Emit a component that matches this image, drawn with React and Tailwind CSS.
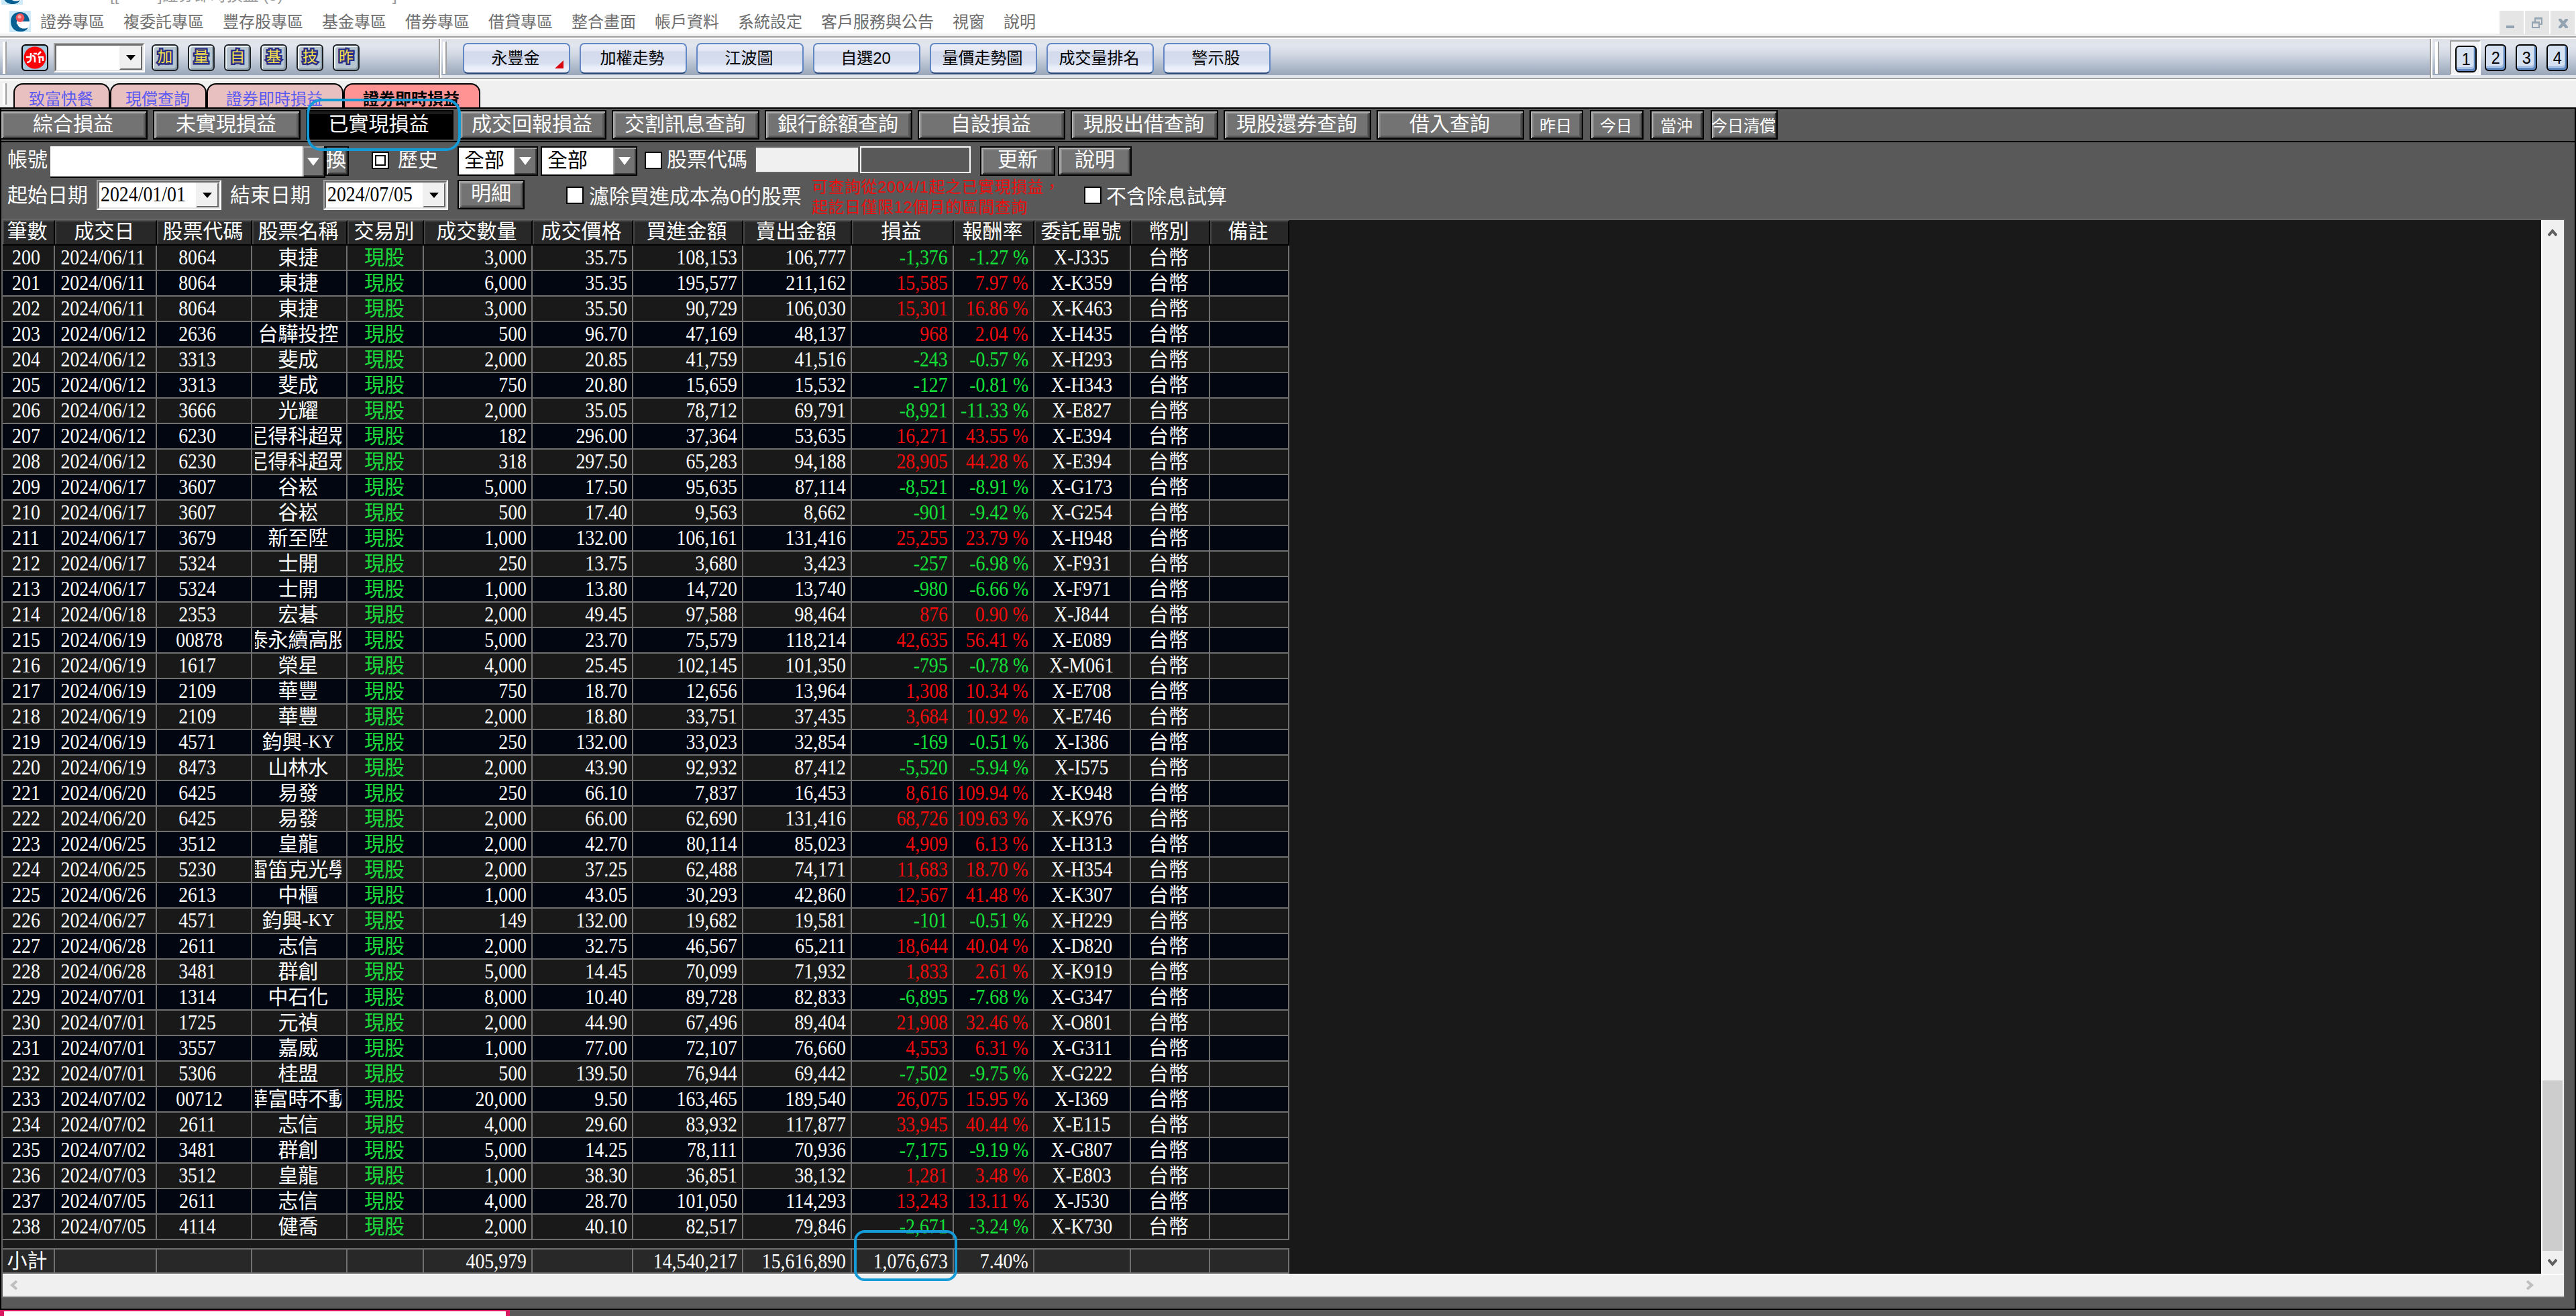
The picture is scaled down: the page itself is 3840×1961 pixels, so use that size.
import React from "react";

const SANS = "font-['Liberation_Sans','Noto_Sans_CJK_TC',sans-serif]";
const SERIF = "font-['Liberation_Serif','Noto_Sans_CJK_TC',serif]";
const BEVEL =
  "border-2 border-black bg-[#737373] shadow-[inset_2px_2px_0_#b0b0b0,inset_-2px_-2px_0_#3c3c3c,inset_4px_4px_0_#888888,inset_-4px_-4px_0_#5c5c5c]";

const menus = [
  "證券專區", "複委託專區", "豐存股專區", "基金專區", "借券專區", "借貸專區", "整合畫面",
  "帳戶資料", "系統設定", "客戶服務與公告", "視窗", "說明",
];

const tools = ["加", "量", "自", "基", "技", "昨"];
const quick = ["永豐金", "加權走勢", "江波圖", "自選20", "量價走勢圖", "成交量排名", "警示股"];
const pages = ["綜合損益", "未實現損益", "已實現損益", "成交回報損益", "交割訊息查詢", "銀行餘額查詢", "自設損益", "現股出借查詢", "現股還券查詢", "借入查詢"];

const cols = [
  { label: "筆數", w: "w-[78px]" },
  { label: "成交日", w: "w-[152px]" },
  { label: "股票代碼", w: "w-[142px]" },
  { label: "股票名稱", w: "w-[142px]" },
  { label: "交易別", w: "w-[114px]" },
  { label: "成交數量", w: "w-[162px]" },
  { label: "成交價格", w: "w-[150px]" },
  { label: "買進金額", w: "w-[164px]" },
  { label: "賣出金額", w: "w-[162px]" },
  { label: "損益", w: "w-[152px]" },
  { label: "報酬率", w: "w-[120px]" },
  { label: "委託單號", w: "w-[144px]" },
  { label: "幣別", w: "w-[118px]" },
  { label: "備註", w: "w-[118px]" },
];

const data = `06/11|8064|東捷|3,000|35.75|108,153|106,777|-1,376|-1.27|J335
06/11|8064|東捷|6,000|35.35|195,577|211,162|15,585|7.97|K359
06/11|8064|東捷|3,000|35.50|90,729|106,030|15,301|16.86|K463
06/12|2636|台驊投控|500|96.70|47,169|48,137|968|2.04|H435
06/12|3313|斐成|2,000|20.85|41,759|41,516|-243|-0.57|H293
06/12|3313|斐成|750|20.80|15,659|15,532|-127|-0.81|H343
06/12|3666|光耀|2,000|35.05|78,712|69,791|-8,921|-11.33|E827
06/12|6230|尼得科超眾|182|296.00|37,364|53,635|16,271|43.55|E394
06/12|6230|尼得科超眾|318|297.50|65,283|94,188|28,905|44.28|E394
06/17|3607|谷崧|5,000|17.50|95,635|87,114|-8,521|-8.91|G173
06/17|3607|谷崧|500|17.40|9,563|8,662|-901|-9.42|G254
06/17|3679|新至陞|1,000|132.00|106,161|131,416|25,255|23.79|H948
06/17|5324|士開|250|13.75|3,680|3,423|-257|-6.98|F931
06/17|5324|士開|1,000|13.80|14,720|13,740|-980|-6.66|F971
06/18|2353|宏碁|2,000|49.45|97,588|98,464|876|0.90|J844
06/19|00878|國泰永續高股息|5,000|23.70|75,579|118,214|42,635|56.41|E089
06/19|1617|榮星|4,000|25.45|102,145|101,350|-795|-0.78|M061
06/19|2109|華豐|750|18.70|12,656|13,964|1,308|10.34|E708
06/19|2109|華豐|2,000|18.80|33,751|37,435|3,684|10.92|E746
06/19|4571|鈞興-KY|250|132.00|33,023|32,854|-169|-0.51|I386
06/19|8473|山林水|2,000|43.90|92,932|87,412|-5,520|-5.94|I575
06/20|6425|易發|250|66.10|7,837|16,453|8,616|109.94|K948
06/20|6425|易發|2,000|66.00|62,690|131,416|68,726|109.63|K976
06/25|3512|皇龍|2,000|42.70|80,114|85,023|4,909|6.13|H313
06/25|5230|雷笛克光學|2,000|37.25|62,488|74,171|11,683|18.70|H354
06/26|2613|中櫃|1,000|43.05|30,293|42,860|12,567|41.48|K307
06/27|4571|鈞興-KY|149|132.00|19,682|19,581|-101|-0.51|H229
06/28|2611|志信|2,000|32.75|46,567|65,211|18,644|40.04|D820
06/28|3481|群創|5,000|14.45|70,099|71,932|1,833|2.61|K919
07/01|1314|中石化|8,000|10.40|89,728|82,833|-6,895|-7.68|G347
07/01|1725|元禎|2,000|44.90|67,496|89,404|21,908|32.46|O801
07/01|3557|嘉威|1,000|77.00|72,107|76,660|4,553|6.31|G311
07/01|5306|桂盟|500|139.50|76,944|69,442|-7,502|-9.75|G222
07/02|00712|復華富時不動產|20,000|9.50|163,465|189,540|26,075|15.95|I369
07/02|2611|志信|4,000|29.60|83,932|117,877|33,945|40.44|E115
07/02|3481|群創|5,000|14.25|78,111|70,936|-7,175|-9.19|G807
07/03|3512|皇龍|1,000|38.30|36,851|38,132|1,281|3.48|E803
07/05|2611|志信|4,000|28.70|101,050|114,293|13,243|13.11|J530
07/05|4114|健喬|2,000|40.10|82,517|79,846|-2,671|-3.24|K730`
  .split("\n")
  .map((line) => line.split("|"));

function Cell({ i, className = "", children }) {
  return (
    <div className={`${cols[i].w} flex h-full shrink-0 items-start border-r-2 border-[#707070] whitespace-nowrap ${className}`}>
      {children}
    </div>
  );
}

/* Condensed numerals, anchored to the right or to the middle of the cell. */
function Num({ i, right, color = "text-white", pad = "", children }) {
  return (
    <Cell i={i} className={right ? "justify-end pr-[7px]" : `justify-center ${pad || "pr-[7px]"}`}>
      <span className={`${color} ${right ? "origin-right" : "origin-center"} scale-x-[0.87] text-[32px] leading-[34px]`}>{children}</span>
    </Cell>
  );
}

function Name({ text }) {
  const [base, suffix] = text.split("-");
  return (
    <Cell i={3} className="pr-[7px] pl-[4px]">
      <div className="flex h-full w-full justify-center overflow-hidden text-[30px] leading-[35px] text-white">
        <span className="shrink-0">{base}</span>
        {suffix && <span className="shrink-0 text-[27px]">-{suffix}</span>}
      </div>
    </Cell>
  );
}

function Row({ row, index }) {
  const [date, code, name, qty, price, buy, sell, pl, rate, order] = row;
  const tone = pl.startsWith("-") ? "text-[#14e03a]" : "text-[#f00c0c]";
  return (
    <div className={`flex h-[38px] w-[1918px] border-b-2 border-[#707070] ${index % 2 ? "bg-[#020611]" : "bg-[#191919]"}`}>
      <Num i={0}>{200 + index}</Num>
      <Num i={1}>2024/{date}</Num>
      <Num i={2} pad={code.length > 4 ? "pr-[14px]" : "pr-[20px]"}>{code}</Num>
      <Name text={name} />
      <Cell i={4} className="justify-center pr-[2px] text-[30px] leading-[35px] text-[#1bd83c]">現股</Cell>
      <Num i={5} right>{qty}</Num>
      <Num i={6} right>{price}</Num>
      <Num i={7} right>{buy}</Num>
      <Num i={8} right>{sell}</Num>
      <Num i={9} right color={tone}>{pl}</Num>
      <Num i={10} right color={tone}>{rate} %</Num>
      <Num i={11} pad="pr-px">X-{order}</Num>
      <Cell i={12} className="justify-center pr-[4px] text-[30px] leading-[35px] text-white">台幣</Cell>
      <Cell i={13} />
    </div>
  );
}

function Grip({ className = "" }) {
  return <div className={`w-[6px] shrink-0 border-r-2 border-[#a0a0a0] bg-white ${className}`} />;
}

function ELogo() {
  return (
    <svg width="32" height="32" viewBox="0 0 32 32" className="shrink-0">
      <rect width="32" height="32" fill="#cdeafa" />
      <path d="M6 22 L31 15 L28 28 L10 30 Z" fill="#fff" />
      <path d="M16 2 C7 2 2 8 2 16 C2 25 8 31 16 31 C22 31 26 29 28 25 C23 28 14 27 12 20 L30 17 C30 7 23 2 16 2 Z" fill="#075f92" />
      <path d="M11 20 C10 14 13 14 17 16 L30 16 L30 18 Z" fill="#fff" />
      <circle cx="16" cy="10.5" r="6.5" fill="#f2545c" />
      <circle cx="15" cy="9" r="2.5" fill="#ffb0a8" />
    </svg>
  );
}

function BrandButton() {
  return (
    <div className="mt-2 flex size-10 shrink-0 items-center justify-center rounded-[6px] border-2 border-black bg-[#a9c9de]">
      <svg width="36" height="36" viewBox="0 0 36 36">
        <circle cx="18" cy="18" r="16.5" fill="#fb0408" />
        <path d="M5 17 H12 M12 11 V19 C12 23 9 25 6 25 M14 15 C18 15 18 17 18 25 M16 12 H21 M22 14 L27 9 M23 17 H31 M25 17 V26 M30 18 V23" stroke="#fff" strokeWidth="2.6" fill="none" />
      </svg>
    </div>
  );
}

function Triangle({ className }) {
  return (
    <svg width="14" height="8" viewBox="0 0 14 8" className={className}>
      <path d="M0 0 H14 L7 8 Z" fill="currentColor" />
    </svg>
  );
}

function Check({ className = "", inner }) {
  return (
    <div className={`flex h-[26px] w-[26px] shrink-0 items-center justify-center border-2 border-black bg-white ${className}`}>
      {inner && <div className="size-[16px] border-2 border-black bg-white" />}
    </div>
  );
}

function Combo({ w, className = "" }) {
  return (
    <div className={`flex h-[44px] ${w} shrink-0 border-2 border-black ${className}`}>
      <div className="flex-1 bg-white pl-[8px] text-[30px] leading-[37px] text-black">全部</div>
      <div className="flex w-[34px] items-center justify-center bg-[#737373] shadow-[inset_2px_2px_0_#a0a0a0,inset_-2px_-2px_0_#3c3c3c]">
        <svg width="18" height="12" viewBox="0 0 18 12"><path d="M0 0 H18 L9 12 Z" fill="#fff" /></svg>
      </div>
    </div>
  );
}

function DateBox({ className = "", children }) {
  return (
    <div className={`flex h-[45px] w-[186px] shrink-0 border-2 border-t-[#a0a0a0] border-r-white border-b-white border-l-[#a0a0a0] ${className}`}>
      <div className="flex flex-1 border-2 border-t-[#696969] border-r-[#e3e3e3] border-b-[#e3e3e3] border-l-[#696969] bg-white">
        <div className={`${SERIF} w-[144px] shrink-0 pl-[2px]`}>
          <div className="w-[148px] origin-left scale-x-[0.87] text-[32px] leading-[35px] text-black">{children}</div>
        </div>
        <div className="flex h-full flex-1 items-center justify-center border-2 border-t-[#f0f0f0] border-r-[#696969] border-b-[#696969] border-l-[#f0f0f0] bg-[#f0f0f0]">
          <Triangle className="text-black" />
        </div>
      </div>
    </div>
  );
}

function Bevel({ className = "", children }) {
  return <div className={`${BEVEL} shrink-0 text-center whitespace-nowrap text-white ${className}`}>{children}</div>;
}

function WindowSwitch({ n, className = "" }) {
  return (
    <div className={`h-10 w-8 shrink-0 rounded-[6px] border-2 border-black bg-[#d5e0f0] text-center text-[26px] leading-[37px] text-black shadow-[inset_-2px_-3px_0_#5f87c0,inset_-3px_-6px_0_#a9c1e2] ${className}`}>
      <span className="inline-block scale-x-[0.9]">{n}</span>
    </div>
  );
}

function Chevron({ d, className = "", w = 14, h = 12 }) {
  return (
    <svg width={w} height={h} viewBox={`0 0 ${w} ${h}`} className={className}>
      <path d={d} fill="none" stroke="currentColor" strokeWidth="4" />
    </svg>
  );
}

export default function App() {
  return (
    <div className={`${SANS} relative flex h-[1961px] w-[3840px] flex-col overflow-hidden bg-[#595959]`}>
      {/* Menu bar */}
      <div className="flex h-[54px] shrink-0 flex-col border-b-4 border-[#f0f0f0] bg-white">
        <div className="flex h-[7px] shrink-0 overflow-hidden text-[24px] leading-[24px] whitespace-nowrap text-[#999]">
          <div className="mr-[130px] ml-[2px] -mt-[25px] h-8"><ELogo /></div>
          <span className="-mt-[19px] w-[71px]">[[</span>
          <span className="-mt-[19px] w-[350px]">]證券即時損益 (5)</span>
          <span className="-mt-[19px]">]</span>
        </div>
        <div className="flex h-[43px] shrink-0 pl-[14px]">
          <div className="mt-[9px]"><ELogo /></div>
          <div className="mt-[11px] ml-[14px] flex gap-[28px] text-[24px] leading-[30px] whitespace-nowrap text-[#6e6e6e]">
            {menus.map((m) => <span key={m}>{m}</span>)}
          </div>
          <div className="mt-[9px] mr-[2px] ml-auto flex h-[36px] gap-[2px] text-[#93a3b1]">
            <div className="w-[36px] bg-[#e5e5e5] pt-[22px] pl-[10px]"><div className="h-1 w-3 bg-[#93a3b1]" /></div>
            <div className="w-[36px] bg-[#e5e5e5] pt-[10px] pl-[10px]">
              <svg width="16" height="16" viewBox="0 0 16 16" fill="none" stroke="currentColor" strokeWidth="2">
                <path d="M5 6 V1 H15 V10 H12 M4 2 H16 M1 8 V15 H11 V7 H0 M0 8 H12" />
              </svg>
            </div>
            <div className="w-[36px] bg-[#e5e5e5] pt-[12px] pl-[12px]">
              <svg width="14" height="14" viewBox="0 0 14 14" stroke="currentColor" strokeWidth="4.5"><path d="M1 0 L13 14 M13 0 L1 14" /></svg>
            </div>
          </div>
        </div>
      </div>

      {/* Tool band */}
      <div className="flex h-[66px] shrink-0 border-y-2 border-t-[#a0a0a0] border-b-white bg-[#dfe5eb]">
        <div className="flex w-full border-y-2 border-t-white border-b-[#a0a0a0] pb-1">
          <div className="flex h-[58px] w-full bg-[linear-gradient(to_bottom,#dfe2e8_0,#e1e5ed_10px,#d3dae4_22px,#b5c0cf_38px,#9aa7ba_54px,#dfe5eb_54px)]">
            <div className="flex w-[658px] shrink-0 border-r-2 border-white">
              <div className="flex w-full border-r-2 border-[#a0a0a0] pl-1">
                <Grip className="mt-1 h-[48px]" />
                <div className="ml-[22px] flex"><BrandButton /></div>
                <div className="mt-[6px] ml-2 flex h-[44px] w-[136px] shrink-0 border-2 border-t-[#a0a0a0] border-r-white border-b-white border-l-[#a0a0a0]">
                  <div className="flex flex-1 border-2 border-t-[#696969] border-r-[#e3e3e3] border-b-[#e3e3e3] border-l-[#696969] bg-white">
                    <div className="ml-auto flex h-full w-[34px] items-center justify-center border-2 border-t-[#f0f0f0] border-r-[#696969] border-b-[#696969] border-l-[#f0f0f0] bg-[#f0f0f0]">
                      <Triangle className="text-black" />
                    </div>
                  </div>
                </div>
                <div className="mt-2 ml-[10px] flex gap-[14px]">
                  {tools.map((t) => (
                    <div key={t} className="size-10 rounded-[6px] border-2 border-[#1c2226] bg-[#b6c5cf] text-center text-[22px] leading-[34px] text-[#f6e04e] shadow-[inset_2px_2px_0_#eef3f6,inset_-2px_-2px_0_#8b9ba8] [-webkit-text-stroke:5px_#2b2f86] [paint-order:stroke_fill]">
                      {t}
                    </div>
                  ))}
                </div>
              </div>
            </div>
            <Grip className="mt-1 ml-[2px] h-[48px]" />
            <div className="mt-[6px] ml-6 flex gap-[14px]">
              {quick.map((q, i) => (
                <div key={q} className="flex h-[46px] w-[160px] shrink-0 justify-center rounded-[7px] border-2 border-[#6387c4] border-b-[#2c4a7c] bg-[linear-gradient(to_bottom,#eceff8_0,#e2e6f4_10px,#d2daec_11px,#d6deef_28px,#e9eefa_34px,#eef2fc_42px)] pr-[3px] text-[24px] leading-[41px] whitespace-nowrap text-black">
                  {i === 0 && <span className="w-[13px]" />}
                  <span>{q}</span>
                  {i === 0 && (
                    <svg width="13" height="12" viewBox="0 0 13 12" className="mt-[24px] -mr-[22px] ml-[22px]"><path d="M13 0 V12 H0 Z" fill="#d90612" /></svg>
                  )}
                </div>
              ))}
            </div>
            <div className="ml-auto flex w-[218px] border-l-2 border-[#a0a0a0]">
              <div className="flex w-full border-l-2 border-white pl-1">
                <Grip className="mt-1 h-[48px]" />
                <div className="mt-[2px] ml-4 flex h-[52px] w-[46px] border-2 border-t-[#a0a0a0] border-r-white border-b-white border-l-[#a0a0a0] bg-[#f3f4f8] pt-[6px] pl-[6px]">
                  <WindowSwitch n="1" />
                </div>
                <div className="mt-2 ml-[6px] flex gap-[14px]">
                  <WindowSwitch n="2" />
                  <WindowSwitch n="3" />
                  <WindowSwitch n="4" />
                </div>
              </div>
            </div>
          </div>
        </div>
      </div>

      {/* Document tabs */}
      <div className="flex h-[40px] shrink-0 bg-[#f0f0f0] pt-1 pl-1 text-[24px] leading-[43px] whitespace-nowrap">
        <Grip className="h-[32px]" />
        <div className="ml-[10px] flex text-center text-[#5c5af0]">
          <div className="h-[36px] w-[144px] rounded-t-[14px] border-2 border-b-0 border-black bg-[#e8c0c0] pr-[2px]">致富快餐</div>
          <div className="h-[36px] w-[144px] rounded-t-[14px] border-2 border-b-0 border-black bg-[#e8c0c0] pr-[2px]">現償查詢</div>
          <div className="h-[36px] w-[204px] rounded-t-[14px] border-2 border-b-0 border-black bg-[#e8c0c0] pr-[2px]">證券即時損益</div>
          <div className="h-[36px] w-[204px] rounded-t-[14px] border-2 border-b-0 border-black bg-[#ff9393] pr-[2px] font-bold text-black">證券即時損益</div>
        </div>
      </div>

      {/* Main frame */}
      <div className="flex h-[1792px] shrink-0 flex-col border-2 border-black bg-[#595959]">
        {/* Report pages */}
        <div className="flex h-[50px] shrink-0 border-b-2 border-black pt-[2px]">
          <div className="-ml-[2px] flex gap-[8px] text-[30px] leading-[38px]">
            {pages.map((p, i) =>
              i === 2 ? (
                <div key={p} className="h-[44px] w-[220px] border-2 border-black bg-black pr-[3px] text-center whitespace-nowrap text-white shadow-[inset_0_4px_0_#1c1c1c]">{p}</div>
              ) : (
                <Bevel key={p} className="h-[44px] w-[220px] pr-[2px]">{p}</Bevel>
              )
            )}
          </div>
          <div className="ml-[8px] flex gap-[10px] text-[24px] leading-[44px]">
            <Bevel className="h-[44px] w-[80px] pr-[2px]">昨日</Bevel>
            <Bevel className="h-[44px] w-[80px] pr-[2px]">今日</Bevel>
            <Bevel className="h-[44px] w-[80px] pr-[2px]">當沖</Bevel>
            <Bevel className="flex h-[44px] w-[100px] justify-center pr-[2px]">今日清償</Bevel>
          </div>
        </div>

        {/* Filters */}
        <div className="flex h-[54px] shrink-0 pt-[6px] pl-[9px] text-[30px] leading-[40px] whitespace-nowrap text-white">
          <span className="w-[64px] shrink-0">帳號</span>
          <div className="flex h-[47px] w-[410px] shrink-0 border-b-2 border-black">
            <div className="flex-1 bg-white" />
            <div className="flex w-[34px] items-center justify-center border-r-2 border-black bg-[#737373] shadow-[inset_2px_2px_0_#a0a0a0,inset_-2px_-2px_0_#3c3c3c]">
              <svg width="18" height="12" viewBox="0 0 18 12"><path d="M0 0 H18 L9 12 Z" fill="#fff" /></svg>
            </div>
          </div>
          <Bevel className="flex h-[44px] w-[35px] justify-center pr-[3px] leading-[36px]">換</Bevel>
          <Check inner className="mt-2 ml-[34px]" />
          <span className="ml-[13px] w-[89px]">歷史</span>
          <Combo w="w-[120px]" />
          <Combo w="w-[144px]" className="ml-[4px]" />
          <Check className="mt-2 ml-[11px]" />
          <span className="ml-[7px] w-[131px]">股票代碼</span>
          <div className="h-[40px] w-[156px] shrink-0 border-2 border-[#646464] bg-[#f0f0f0]" />
          <div className="ml-px h-[40px] w-[165px] shrink-0 border-2 border-white" />
          <Bevel className="ml-[14px] h-[44px] w-[112px] leading-[36px]">更新</Bevel>
          <Bevel className="ml-[4px] h-[44px] w-[110px] leading-[36px]">說明</Bevel>
        </div>
        <div className="flex h-[60px] shrink-0 pt-[2px] pl-[9px] text-[30px] leading-[38px] whitespace-nowrap text-white">
          <span className="mt-1 w-[133px] shrink-0">起始日期</span>
          <DateBox>2024/01/01</DateBox>
          <span className="mt-1 ml-[13px] w-[139px] shrink-0">結束日期</span>
          <DateBox>2024/07/05</DateBox>
          <Bevel className="ml-[14px] h-[44px] w-[100px] leading-[36px]">明細</Bevel>
          <Check className="mt-[10px] ml-[62px]" />
          <span className="mt-[6px] ml-[8px] w-[332px] shrink-0">濾除買進成本為0的股票</span>
          <div className="h-[58px] w-[406px] shrink-0 text-[24px] leading-[30px] tracking-[0.5px] text-[#ee0d0d]">
            <div className="-mt-[4px]">可查詢從2004/1起之已實現損益，</div>
            <div>起訖日僅限12個月的區間查詢</div>
          </div>
          <Check className="mt-[10px]" />
          <span className="mt-[6px] ml-[7px]">不含除息試算</span>
        </div>

        {/* Grid */}
        <div className={`${SERIF} mr-[14px] flex h-[1608px] shrink-0 flex-col border-2 border-[#646464] bg-[#191919]`}>
          <div className="flex h-[1570px]">
            <div className="flex-1">
              <div className="flex h-[38px]">
                {cols.map((c) => (
                  <div key={c.label} className={`${c.w} flex h-full shrink-0 justify-center border-t-2 border-r-2 border-b-2 border-t-[#505050] border-r-black border-b-black bg-[#282828] shadow-[inset_2px_0_0_#464646]`}>
                    <span className="-mt-[3px] pr-[3px] text-[30px] leading-[36px] whitespace-nowrap text-white">{c.label}</span>
                  </div>
                ))}
              </div>
              {data.map((r, i) => <Row key={i} row={r} index={i} />)}
              <div className="flex h-[50px] w-[1918px] flex-col justify-end">
                <div className="flex h-[38px] border-y-2 border-[#707070] bg-[#282828]">
                  <Cell i={0} className="justify-center pr-[3px] text-[30px] leading-[34px] text-white">小計</Cell>
                  <Cell i={1} />
                  <Cell i={2} />
                  <Cell i={3} />
                  <Cell i={4} />
                  <Num i={5} right>405,979</Num>
                  <Cell i={6} />
                  <Num i={7} right>14,540,217</Num>
                  <Num i={8} right>15,616,890</Num>
                  <Num i={9} right>1,076,673</Num>
                  <Num i={10} right>7.40%</Num>
                  <Cell i={11} />
                  <Cell i={12} />
                  <Cell i={13} />
                </div>
              </div>
            </div>
            <div className="flex w-[34px] shrink-0 flex-col border-l-2 border-white bg-[#f0f0f0]">
              <Chevron d="M1 11 L7 4 L13 11" className="mt-[12px] ml-[8px] text-[#606060]" />
              <div className="mt-auto h-[254px] w-[30px] bg-[#cdcdcd]" />
              <Chevron d="M1 1 L7 8 L13 1" className="mt-[12px] mb-[10px] ml-[8px] shrink-0 text-[#606060]" />
            </div>
          </div>
          <div className="flex h-[34px] shrink-0 border-t-2 border-white bg-[#f0f0f0] pt-2 pr-[44px] pl-[10px] text-[#bfbfbf]">
            <Chevron w={12} h={14} d="M11 1 L4 7 L11 13" />
            <Chevron w={12} h={14} d="M1 1 L8 7 L1 13" className="ml-auto" />
          </div>
        </div>
      </div>
      <div className="h-[9px] w-[760px] shrink-0 border-x-[6px] border-t-2 border-[#d81b60] bg-white" />

      {/* Highlight rings */}
      <div className="absolute top-[147px] left-[457px] h-[78px] w-[230px] rounded-[22px] border-4 border-[#149bd8]" />
      <div className="absolute top-[1833px] left-[1273px] h-[76px] w-[154px] rounded-[16px] border-4 border-[#149bd8]" />
    </div>
  );
}
